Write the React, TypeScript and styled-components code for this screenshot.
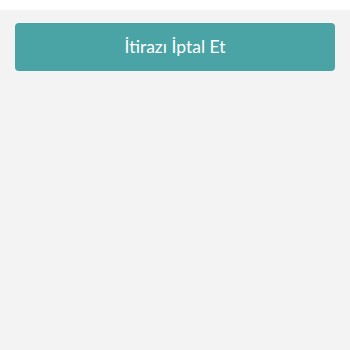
import styled, { createGlobalStyle } from "styled-components"

const GlobalStyle = createGlobalStyle`
    html, body {
        margin: 0;
        padding: 0;
        background-color: #f3f3f4;
        font-family: "Lato", "Open Sans", sans-serif;
    }
`

const PageStyled = styled.div`
    min-height: 350px;
    background-color: #f3f3f4;
`

const TopBarStyled = styled.div`
    height: 10px;
    background-color: #ffffff;
`

const ActionsStyled = styled.div`
    padding: 13px 15px;
`

const CancelButton = styled.button`
    display: flex;
    justify-content: center;
    align-items: center;
    width: 100%;
    height: 48px;
    padding: 0 0 1px;
    border: none;
    border-radius: 4px;
    background-color: #4aa3a4;
    color: #ffffff;
    font-family: "Lato", sans-serif;
    font-size: 17.5px;
    cursor: pointer;
`

export default function App() {
    return (
        <>
            <GlobalStyle />
            <PageStyled>
                <TopBarStyled />
                <ActionsStyled>
                    <CancelButton>İtirazı İptal Et</CancelButton>
                </ActionsStyled>
            </PageStyled>
        </>
    )
}
